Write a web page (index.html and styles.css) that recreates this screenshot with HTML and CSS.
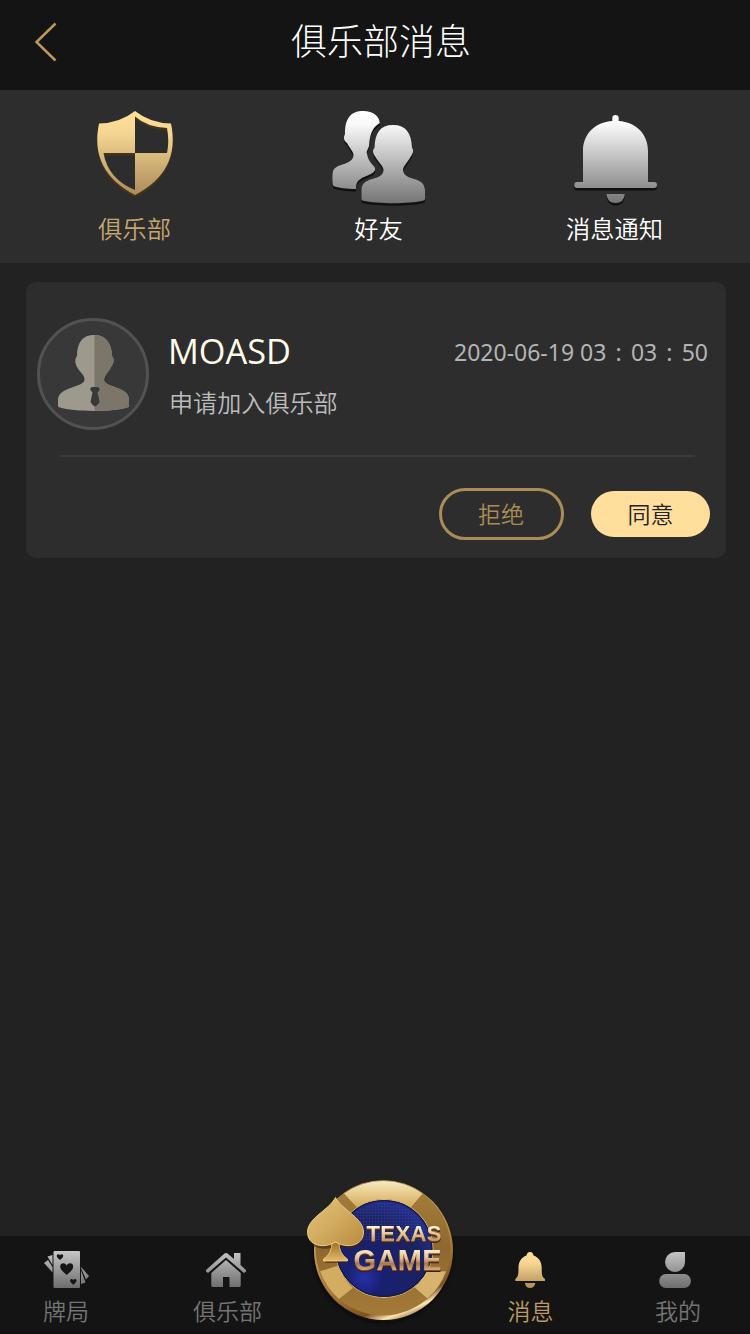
FILE: index.html
```html
<!DOCTYPE html>
<html lang="zh-CN">
<head>
<meta charset="utf-8">
<title>俱乐部消息</title>
<link rel="stylesheet" href="styles.css">
</head>
<body>
<div class="app">
  <header class="header">
    <svg class="back" viewBox="30 20 32 44"><path d="M55.500 23.500L36.500 42L55.500 60.500" fill="none" stroke="#bb985b" stroke-width="2.500"/></svg>
    <h1 class="title">俱乐部消息</h1>
  </header>

  <nav class="tabs">
    <a class="tab tab-club active">
      <svg class="tab-icon" viewBox="85 104 100 104">
        <defs>
          <linearGradient id="gold" x1="0" y1="111" x2="0" y2="195" gradientUnits="userSpaceOnUse"><stop offset="0" stop-color="#ffe09a"/><stop offset=".25" stop-color="#f6d792"/><stop offset="1" stop-color="#ab8b5c"/></linearGradient>
          <path id="shield" fill-rule="evenodd" d="M135 111Q150 123 171 123.500Q181 171 135 195Q89 171 99 123.500Q120 123 135 111ZM135 116.500V153H167Q169.500 141 167 128Q147 127 135 116.500ZM103.500 153Q108 179 135 190V153Z"/>
        </defs>
        <use href="#shield" y="2.500" fill="#45341a"/>
        <use href="#shield" fill="url(#gold)"/>
      </svg>
      <span>俱乐部</span>
    </a>
    <a class="tab tab-friends">
      <svg class="tab-icon" viewBox="329 104 100 104">
        <defs>
          <linearGradient id="silver" x1="0" y1="111" x2="0" y2="203" gradientUnits="userSpaceOnUse"><stop offset="0" stop-color="#fff"/><stop offset=".15" stop-color="#f8f8f8"/><stop offset="1" stop-color="#757575"/></linearGradient>
          <g id="friends">
            <path d="M363.500 111C373 111 379.500 116 379.700 123C372 128 370 134 369 146C368 150 366 151 367 154C368 160 371 163 374.500 167C377.500 172 369 175 364 177C358 180 356 182 356 189C347 189 338 188 333.500 186C332 185 332 172 333.500 170C338 163 353 165 353.500 155C353.700 152 349 147 347 143C344 141 343 138 345 134C345 119 350 111 363.500 111Z"/>
            <path d="M393 125C406 125 411.500 133 412 148C414 150 413 154 410.500 157C408 162 403 166 403 170C404 182 424 175 425 190V199Q425 200 423 200.700C410 204 377 204 363 200.700Q361.500 200 361.500 199V190C362 175 383 182 383.500 170C383.500 166 378 162 375.500 157C373 154 372 150 374.500 148C375 133 380 125 393 125Z"/>
          </g>
        </defs>
        <use href="#friends" y="2.500" fill="#111"/>
        <use href="#friends" fill="url(#silver)"/>
      </svg>
      <span>好友</span>
    </a>
    <a class="tab tab-notice">
      <svg class="tab-icon" viewBox="565 104 100 104">
        <defs>
          <path id="bell" d="M612.300 121V118Q612.300 115 615.500 115T618.700 118V121C636 122 648 134 648 151V182H654Q657 182 657 185T654 188H577Q574.300 188 574.300 185T577 182H583V151C583 134 595 122 612.300 121ZM606.500 194H624.700Q624 203 615.600 203T606.500 194Z"/>
        </defs>
        <use href="#bell" y="2.500" fill="#111"/>
        <use href="#bell" fill="url(#silver)"/>
      </svg>
      <span>消息通知</span>
    </a>
  </nav>

  <main class="content">
    <article class="card">
      <div class="card-top">
        <svg class="avatar" viewBox="37 318 112 112">
          <defs>
            <clipPath id="right-half"><rect x="94.500" y="330" width="50" height="90"/></clipPath>
            <path id="person" d="M94 335C105 335 111.500 342 112 356C114.500 359 114 363 111 367C109 372 104 375 104 380C105 388 128 386 129 399V406Q129 407 127 407.500C115 412 73 412 60 407.500Q58 407 58 406V399C60 386 83 388 84.500 380C85 375 79.500 372 77 367C75 363 74.500 359 77 356C77 342 83 335 94 335Z"/>
          </defs>
          <circle cx="93" cy="374" r="54.500" fill="#383838" stroke="#525252" stroke-width="3"/>
          <use href="#person" fill="#9e998d"/>
          <use href="#person" fill="#7c766a" clip-path="url(#right-half)"/>
          <path d="M91.500 387H98Q100 388 99.500 390L97.500 392.500L99.700 402Q98 405 95 406.500Q92 405 90.500 402L92.500 392.500L90.300 390Q90 388 91.500 387Z" fill="#393939"/>
        </svg>
        <div class="info">
          <div class="info-head">
            <span class="name">MOASD</span>
            <time class="time">2020-06-19 03<span class="colon">:</span>03<span class="colon">:</span>50</time>
          </div>
          <p class="desc">申请加入俱乐部</p>
        </div>
      </div>
      <div class="actions">
        <button class="btn reject">拒绝</button>
        <button class="btn accept">同意</button>
      </div>
    </article>
  </main>

  <footer class="nav">
    <a class="nav-item nav-games">
      <svg class="nav-icon" viewBox="41 1246 50 44">
        <defs>
          <linearGradient id="gray" x1="0" y1="1251" x2="0" y2="1288" gradientUnits="userSpaceOnUse"><stop offset="0" stop-color="#c6c6c6"/><stop offset="1" stop-color="#6d6d6d"/></linearGradient>
          <path id="heart" d="M0 6C-3 3-6.500 1-6.500-2.500C-6.500-6-2-7 0-3.500C2-7 6.500-6 6.500-2.500C6.500 1 3 3 0 6Z"/>
        </defs>
        <g fill="url(#gray)">
          <path d="M44 1263L48 1260L52.500 1267V1272.500Z"/>
          <path d="M47.500 1256.500L52.500 1255V1265Z"/>
          <path d="M81 1267L89 1276L86 1279.500L81 1268Z"/>
          <path d="M81 1270.500L85.500 1282.500L81 1284Z"/>
          <rect x="53.500" y="1251" width="26.500" height="37" rx="1"/>
        </g>
        <g fill="#161616">
          <use href="#heart" transform="translate(66.700 1269)"/>
          <use href="#heart" transform="translate(60 1257) scale(.5)"/>
          <use href="#heart" transform="translate(73.300 1281.800) scale(.5)"/>
        </g>
      </svg>
      <span>牌局</span>
    </a>
    <a class="nav-item nav-club">
      <svg class="nav-icon" viewBox="203 1246 50 44">
        <g fill="url(#gray)">
          <path d="M206 1270L224.500 1253.500Q226 1252.500 227.500 1253.500L234 1259V1253H240.500V1265L246 1270V1271.500L244 1273L226 1257.500L208 1273L206 1271.500Z"/>
          <path d="M226 1260L240.700 1273V1285.500Q240.700 1287 239 1287H229.500V1277H223V1287H213Q211.300 1287 211.300 1285.500V1273Z"/>
        </g>
      </svg>
      <span>俱乐部</span>
    </a>
    <a class="nav-item nav-play">
      <svg class="chip" viewBox="303 1174 160 156">
        <defs>
          <linearGradient id="chip-edge" x1=".3" y1="0" x2=".7" y2="1"><stop offset="0" stop-color="#e6c77c"/><stop offset=".6" stop-color="#ac8036"/><stop offset=".86" stop-color="#7e5222"/><stop offset=".93" stop-color="#ffe6b0"/><stop offset="1" stop-color="#6f4420"/></linearGradient>
          <linearGradient id="light-seg" x1="0" y1="1180" x2="0" y2="1206" gradientUnits="userSpaceOnUse"><stop offset="0" stop-color="#f8edc8"/><stop offset=".4" stop-color="#ecd398"/><stop offset="1" stop-color="#d3ad62"/></linearGradient>
          <linearGradient id="dark-seg" x1="0" y1="1180" x2="0" y2="1315" gradientUnits="userSpaceOnUse"><stop offset="0" stop-color="#a9813a"/><stop offset=".5" stop-color="#8f6830"/><stop offset="1" stop-color="#a37a37"/></linearGradient>
          <radialGradient id="felt" cx=".3" cy=".8" r=".85"><stop offset="0" stop-color="#2630a5"/><stop offset=".22" stop-color="#192071"/><stop offset=".7" stop-color="#1b2260"/><stop offset="1" stop-color="#232f91"/></radialGradient>
          <pattern id="dots" width="3" height="3" patternUnits="userSpaceOnUse"><path d="M0 0H3M0 0V3" stroke="#4652a8" stroke-width=".7" opacity=".55"/></pattern>
          <linearGradient id="spade-fill" x1="0" y1="0" x2="1" y2="1"><stop offset="0" stop-color="#e3c57a"/><stop offset=".5" stop-color="#d2ab5f"/><stop offset="1" stop-color="#b98a40"/></linearGradient>
          <linearGradient id="stem-fill" x1="0" y1="0" x2="0" y2="1"><stop offset="0" stop-color="#9d6d28"/><stop offset="1" stop-color="#e5bb69"/></linearGradient>
          <linearGradient id="texas-fill" x1="0" y1="1226" x2="0" y2="1241" gradientUnits="userSpaceOnUse"><stop offset="0" stop-color="#fff8de"/><stop offset=".5" stop-color="#e5c9a0"/><stop offset="1" stop-color="#c2956b"/></linearGradient>
          <linearGradient id="game-fill" x1="0" y1="1249" x2="0" y2="1270" gradientUnits="userSpaceOnUse"><stop offset="0" stop-color="#fff1ce"/><stop offset=".45" stop-color="#dfbd93"/><stop offset=".7" stop-color="#a8764b"/><stop offset="1" stop-color="#d8ac7c"/></linearGradient>
          <filter id="soft" x="-20%" y="-20%" width="140%" height="140%"><feGaussianBlur stdDeviation="2"/></filter>
        </defs>
        <circle cx="383" cy="1253" r="69" fill="#080808" opacity=".75" filter="url(#soft)"/>
        <circle cx="383.500" cy="1250.500" r="69.500" fill="url(#chip-edge)"/>
        <circle cx="383" cy="1248" r="67.500" fill="url(#dark-seg)"/>
        <g stroke="#86602b" stroke-width=".6">
          <path fill="url(#light-seg)" d="M343.500 1193.500A67.500 67.500 0 0 1 423 1193.500L411 1208Q384 1191 357 1208Z"/>
          <path fill="#d8b36e" d="M446.500 1271A67.500 67.500 0 0 1 427.500 1299L413.500 1287Q421 1281 426 1271Z"/>
          <path fill="#d3ac62" d="M319.500 1271A67.500 67.500 0 0 0 339 1299.500L353.500 1288Q343 1279 339 1265Z"/>
        </g>
        <circle cx="384" cy="1248.500" r="49" fill="url(#felt)" stroke="#f0c560" stroke-width="1"/>
        <path d="M348 1219A47 47 0 0 1 426 1229V1240H348Z" fill="url(#dots)"/>
        <circle cx="384" cy="1248.500" r="47.800" fill="none" stroke="#11184f" stroke-width="1.200"/>
        <path fill="#3b260c" opacity=".6" transform="translate(1 2)" d="M335.500 1197C342 1209 364 1217 363.500 1233C363 1248 345 1249 338 1245Q339 1254 347.500 1261H323.500Q332 1254 333 1245C325 1249 307 1247 307.500 1233C308 1218 329 1211 335.500 1197Z"/>
        <path d="M332 1242H339Q339 1254 347.500 1259V1261H323.500V1259Q332 1254 332 1242Z" fill="url(#stem-fill)" stroke="#ffdc85" stroke-width=".7"/>
        <path d="M335.500 1197.500C342 1210 363.500 1218 363.500 1232C363.500 1246 347 1249 335.500 1242C324 1249 307.500 1246 307.500 1232C307.500 1218 329 1210 335.500 1197.500Z" fill="url(#spade-fill)" stroke="#ffe18b" stroke-width=".8"/>
        <text class="logo-texas" x="366.500" y="1241" textLength="75" fill="url(#texas-fill)">TEXAS</text>
        <text class="logo-game" x="353.500" y="1269.500" textLength="88" fill="url(#game-fill)">GAME</text>
      </svg>
    </a>
    <a class="nav-item nav-messages active">
      <svg class="nav-icon" viewBox="506 1246 50 44">
        <defs><linearGradient id="gold-small" x1="0" y1="1253" x2="0" y2="1288" gradientUnits="userSpaceOnUse"><stop offset="0" stop-color="#ffe09b"/><stop offset=".3" stop-color="#f5d591"/><stop offset="1" stop-color="#b08c56"/></linearGradient></defs>
        <path fill="url(#gold-small)" d="M530 1252Q533 1252 533.500 1255.500C539 1257.500 541.700 1262 541.700 1268C541.700 1275 542 1277 545 1279V1281H515.300V1279C518 1277 518.500 1275 518.500 1268C518.500 1262 521 1257.500 526.500 1255.500Q527 1252 530 1252ZM525 1283H535.300Q534.500 1288 530 1288T525 1283Z"/>
      </svg>
      <span>消息</span>
    </a>
    <a class="nav-item nav-mine">
      <svg class="nav-icon" viewBox="653 1246 50 44">
        <g fill="url(#gray)">
          <path d="M675 1252H685V1262A10 10 0 1 1 675 1252Z"/>
          <rect x="659.300" y="1274" width="31.500" height="14" rx="6.500"/>
        </g>
      </svg>
      <span>我的</span>
    </a>
  </footer>
</div>
</body>
</html>
```

FILE: styles.css
```css
* { box-sizing: border-box; }
body {
  margin: 0;
  background: #222;
  color: #fff;
  font-family: "Noto Sans CJK SC", sans-serif;
  font-weight: 350;
}
.app {
  width: 750px;
  height: 1334px;
  display: flex;
  flex-direction: column;
  overflow: hidden;
}
.header {
  height: 90px;
  padding: 20px 29px 0 30px;
  display: grid;
  grid-template-columns: 32px 1fr 21px;
  align-items: start;
  background: #141414;
}
.back { width: 32px; height: 44px; }
.title {
  margin: 0;
  font-size: 36px;
  line-height: 38px;
  font-weight: 300;
  text-align: center;
}
.tabs {
  height: 173px;
  display: flex;
  background: #2d2d2d;
}
.tab {
  display: flex;
  flex-direction: column;
  align-items: center;
  padding-top: 14px;
  font-size: 24.3px;
  line-height: 40px;
}
.tab-icon { width: 100px; height: 104px; }
.tab.active { color: #c4a66f; }
.tab-club { width: 269px; }
.tab-friends { width: 219px; }
.tab-notice { width: 253px; }
.content { flex: 1; padding: 19px 24px 0 26px; }
.card {
  height: 276px;
  border-radius: 10px;
  background: #2d2d2d;
}
.card-top {
  height: 173px;
  padding: 36px 18px 0 11px;
  display: flex;
  gap: 19px;
}
.avatar { width: 112px; height: 112px; flex: none; }
.info { flex: 1; }
.info-head {
  display: flex;
  justify-content: space-between;
  align-items: center;
  height: 66px;
}
.name {
  padding-bottom: 1px;
  font: 400 34.3px/50px "Open Sans", "Noto Sans", sans-serif;
  color: #fffbea;
}
.time {
  padding-top: 2px;
  font-family: "Noto Sans", sans-serif;
  font-size: 23px;
  font-weight: 400;
  color: #b4b4b4;
  white-space: nowrap;
}
.colon {
  display: inline-block;
  width: 24.5px;
  text-align: center;
}
.desc {
  margin: 0;
  padding-left: 1px;
  font-size: 24.1px;
  line-height: 36px;
  color: #bcbcbc;
}
.actions {
  height: 103px;
  margin-left: 34px;
  padding: 15px 16px 0 0;
  display: flex;
  justify-content: flex-end;
  align-items: center;
  gap: 27px;
  background: linear-gradient(#3a3a3a, #3a3a3a) 0 0 / 635px 2px no-repeat;
}
.btn {
  padding: 0 0 2px;
  border: 0;
  font: 350 23px/1 "Noto Sans CJK SC", sans-serif;
}
.reject {
  width: 125px;
  height: 52px;
  padding-right: 1px;
  border: 3px solid #a98d55;
  border-radius: 26px;
  background: none;
  color: #a98d55;
}
.accept {
  width: 119px;
  height: 46px;
  border-radius: 23px;
  background: #ffdf9b;
  color: #222;
}
.nav {
  height: 98px;
  display: flex;
  background: #141414;
  border-bottom: 2px solid #150e13;
}
.nav-item {
  display: flex;
  flex-direction: column;
  align-items: center;
  padding-top: 10px;
  font-size: 23px;
  line-height: 40px;
  color: #747474;
}
.nav-icon { width: 50px; height: 44px; }
.nav-item.active { color: #bd9965; }
.nav-games { width: 132px; }
.nav-club { width: 191px; }
.nav-play { width: 120px; position: relative; }
.nav-messages { width: 175px; }
.nav-mine { width: 120px; }
.chip {
  position: absolute;
  left: -20px;
  top: -62px;
  width: 160px;
  height: 156px;
}
.logo-texas, .logo-game {
  font-family: "Liberation Sans", sans-serif;
  font-weight: 700;
  filter: drop-shadow(0 1px 0 #7d4f2a) drop-shadow(.5px 1px 0 #3d2010);
}
.logo-texas { font-size: 22px; }
.logo-game { font-size: 29px; }
```
